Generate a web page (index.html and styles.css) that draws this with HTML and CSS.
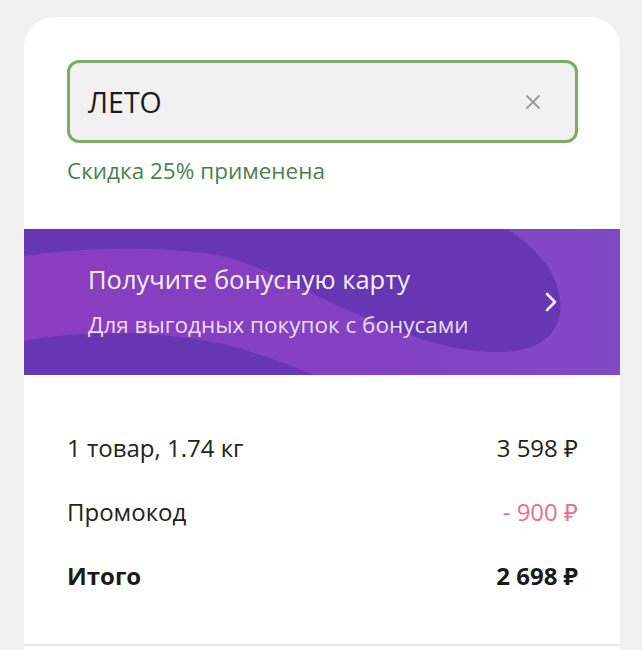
FILE: index.html
```html
<!DOCTYPE html>
<html lang="ru">
<head>
    <meta charset="utf-8">
    <title>Корзина</title>
    <link rel="stylesheet" href="styles.css">
</head>
<body>
    <div class="card">
        <div class="promo-field">
            <span class="promo-code">ЛЕТО</span>
            <button class="clear-button" aria-label="Очистить">
                <svg width="16" height="16" viewBox="0 0 16 16">
                    <path d="M2 2L14 14M14 2L2 14" stroke="#9b9b9b" stroke-width="1.8" stroke-linecap="round"/>
                </svg>
            </button>
        </div>
        <div class="promo-note">Скидка 25% применена</div>

        <div class="bonus-banner">
            <svg class="banner-bg" viewBox="0 0 596 146" preserveAspectRatio="none">
                <defs>
                    <linearGradient id="bandGrad" x1="0" y1="0" x2="1" y2="0">
                        <stop offset="0" stop-color="#8a3dbf"/>
                        <stop offset="0.6" stop-color="#8242c2"/>
                        <stop offset="1" stop-color="#8149c5"/>
                    </linearGradient>
                </defs>
                <rect width="596" height="146" fill="url(#bandGrad)"/>
                <path d="M0 0 L483 0 C515 20 540 50 536 84 C532 112 505 124 470 123 C420 122 380 104 330 84 C270 58 230 30 180 24 C110 16 50 20 0 27 Z" fill="#6636b3"/>
                <path d="M0 112 C70 98 170 102 240 127 C260 134 275 140 290 146 L0 146 Z" fill="#6636b3"/>
            </svg>
            <div class="banner-text">
                <div class="banner-title">Получите бонусную карту</div>
                <div class="banner-subtitle">Для выгодных покупок с бонусами</div>
            </div>
            <svg class="banner-arrow" width="14" height="22" viewBox="0 0 14 22">
                <path d="M3 3L11 11L3 19" stroke="#f4ecff" stroke-width="2.6" fill="none" stroke-linecap="round" stroke-linejoin="round"/>
            </svg>
        </div>

        <div class="summary">
            <div class="summary-row">
                <span>1 товар, 1.74 кг</span>
                <span>3 598 ₽</span>
            </div>
            <div class="summary-row">
                <span>Промокод</span>
                <span class="discount">- 900 ₽</span>
            </div>
            <div class="summary-row total">
                <span>Итого</span>
                <span>2 698 ₽</span>
            </div>
        </div>
        <div class="card-rest"></div>
    </div>
</body>
</html>
```

FILE: styles.css
```css
body {
    margin: 0;
    background-color: #f0f0f0;
    font-family: "Open Sans", "Noto Sans", "DejaVu Sans", sans-serif;
    color: #222;
}

.card {
    width: 596px;
    margin: 17px 0 0 24px;
    padding-top: 43px;
    background-color: #fff;
    border-radius: 30px 30px 0 0;
}

.promo-field {
    display: flex;
    align-items: center;
    justify-content: space-between;
    height: 77px;
    margin: 0 42px 0 43px;
    padding: 0 34px 0 18px;
    border: 3px solid #7dad62;
    border-radius: 12px;
    background-color: #f1f1f1;
}

.promo-code {
    font-size: 28.5px;
    color: #1c1c1c;
}

.clear-button {
    display: flex;
    padding: 0;
    border: none;
    background: none;
    cursor: pointer;
}

.promo-note {
    margin: 13px 0 0 43px;
    font-size: 22.5px;
    line-height: 30px;
    color: #4d7e53;
}

.bonus-banner {
    position: relative;
    display: flex;
    align-items: center;
    justify-content: space-between;
    height: 146px;
    margin-top: 43px;
    padding: 0 62px 0 64px;
    overflow: hidden;
}

.banner-bg {
    position: absolute;
    top: 0;
    left: 0;
    width: 100%;
    height: 100%;
}

.banner-text,
.banner-arrow {
    position: relative;
}

.banner-text {
    margin-top: -4px;
}

.banner-title {
    font-size: 25.5px;
    line-height: 34px;
    color: #f6efff;
}

.banner-subtitle {
    margin-top: 15px;
    font-size: 22.5px;
    line-height: 28px;
    color: #e9dcfa;
}

.summary {
    padding: 40px 42px 37px 43px;
}

.summary-row {
    display: flex;
    justify-content: space-between;
    align-items: center;
    height: 64px;
    font-size: 24px;
}

.discount {
    color: #e7708f;
}

.total {
    font-weight: 700;
    color: #1a1a1a;
}

.card-rest {
    height: 10px;
    border-top: 2px solid #e8e8e8;
}
```
